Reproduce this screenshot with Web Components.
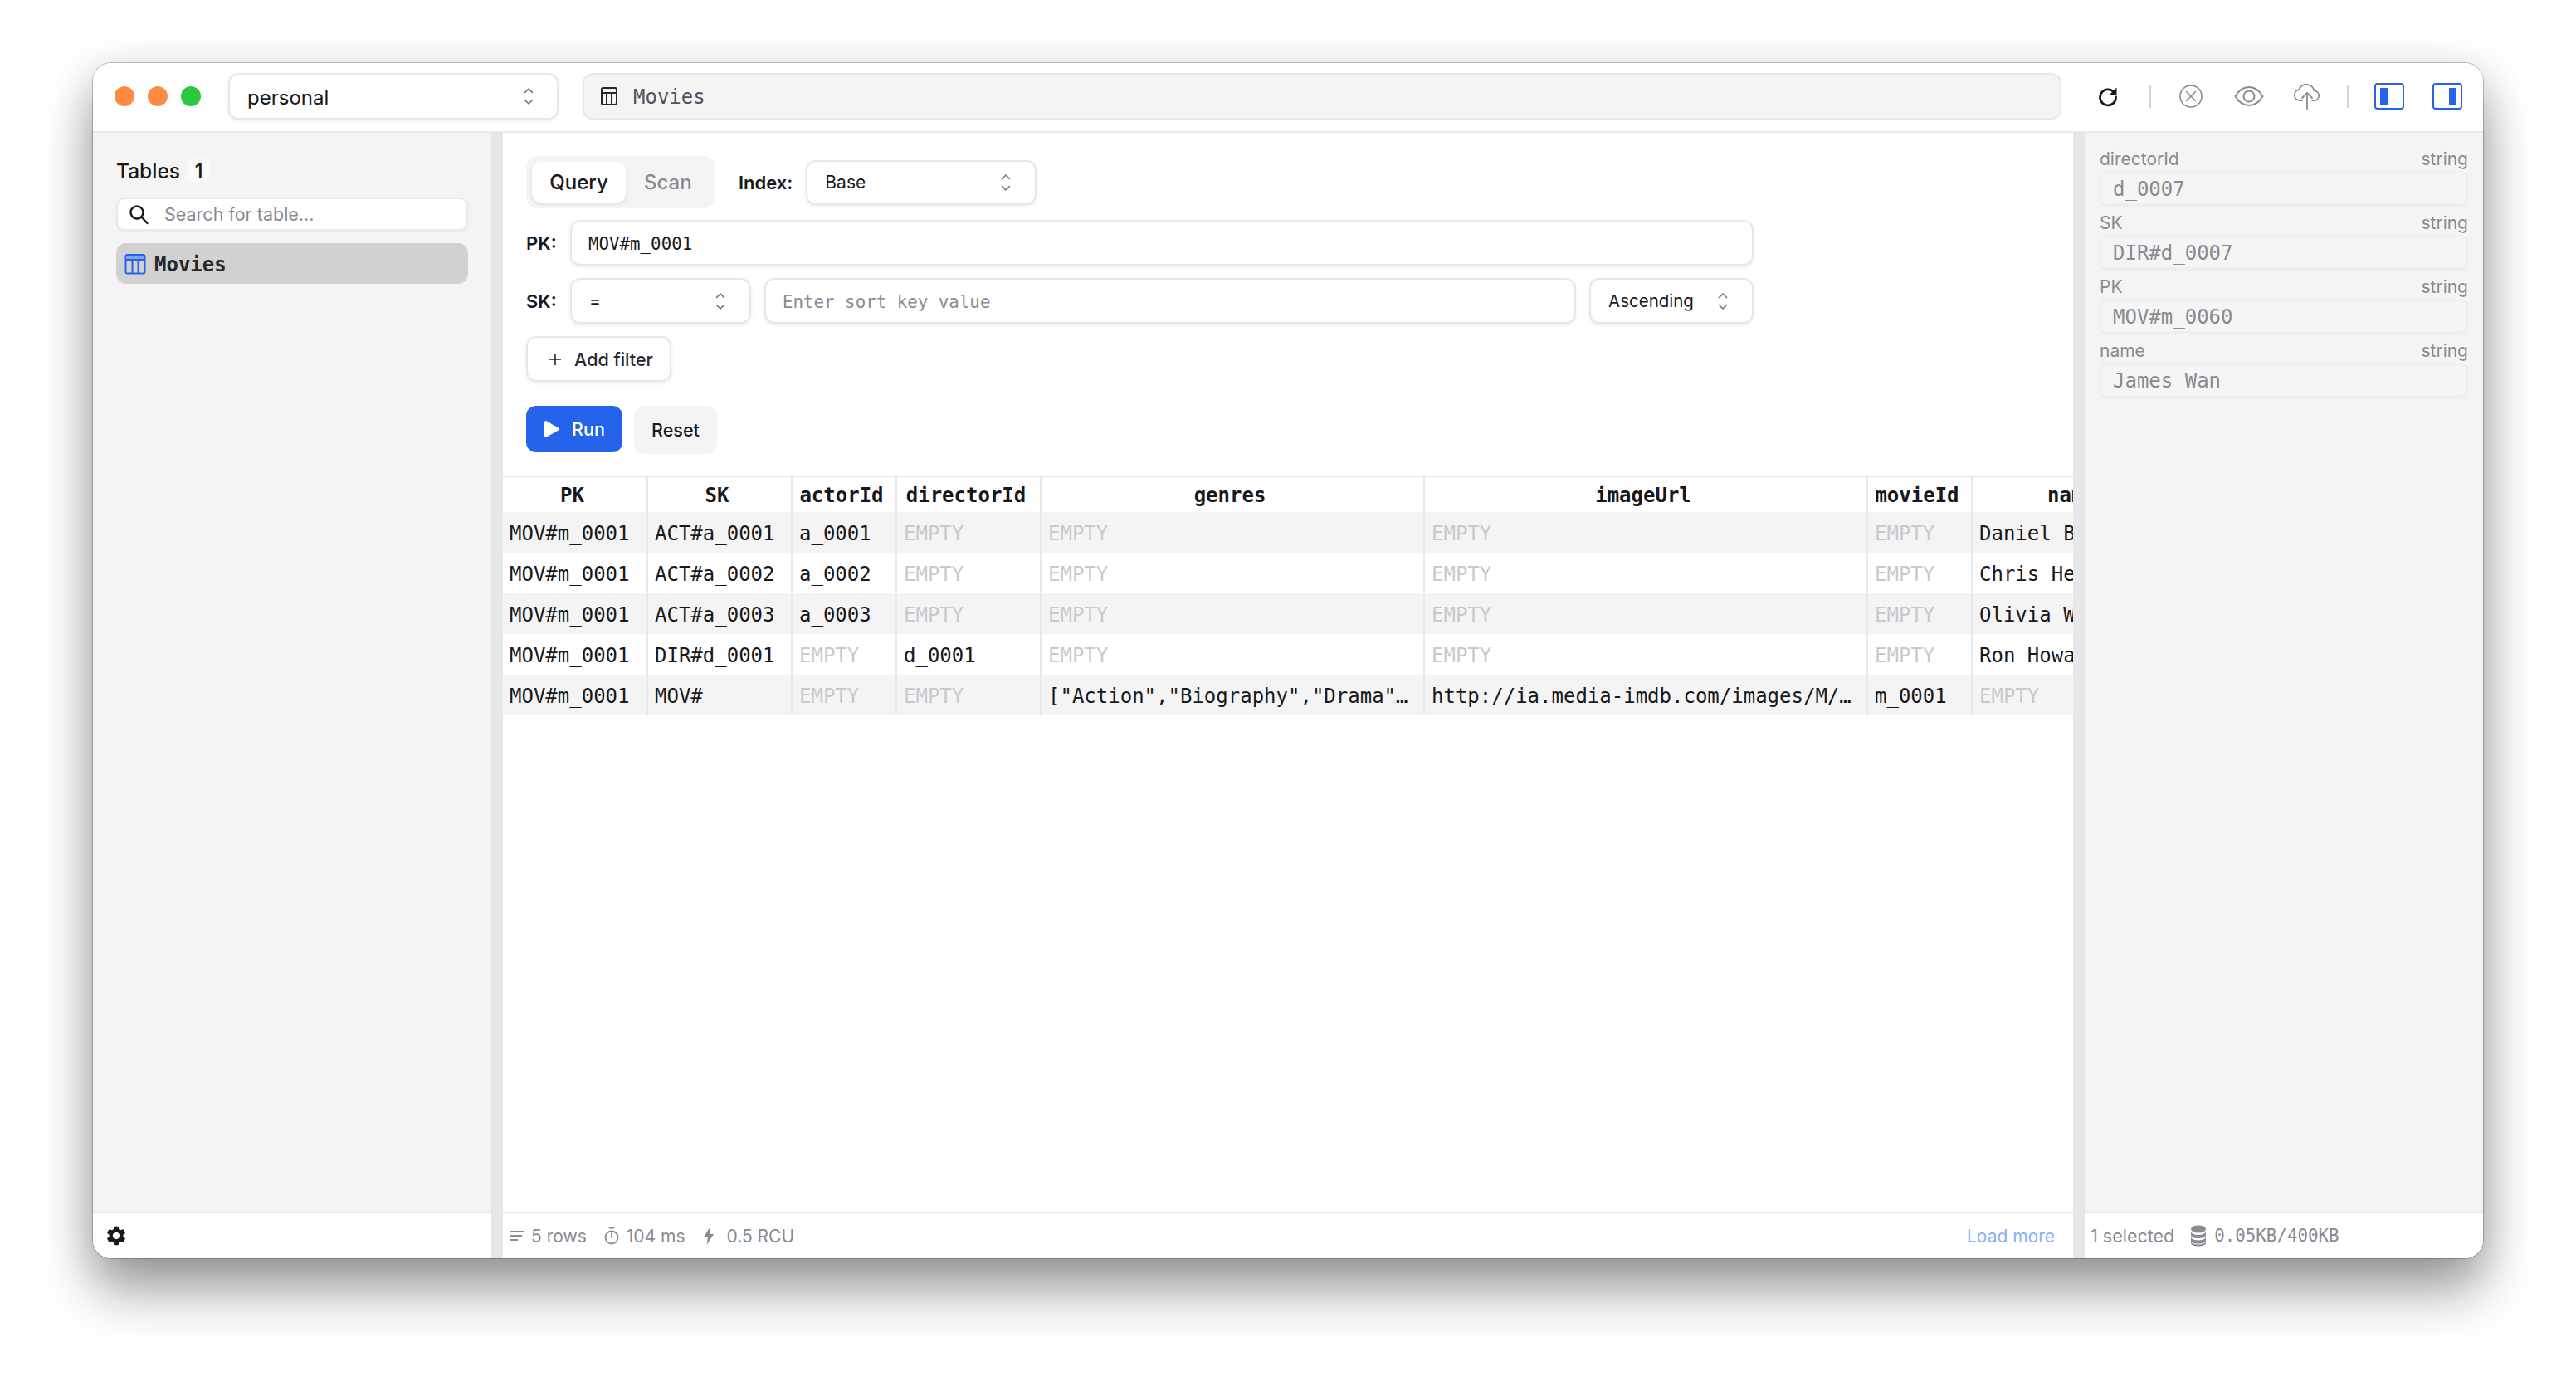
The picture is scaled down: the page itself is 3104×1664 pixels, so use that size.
<!DOCTYPE html>
<html lang="en"><head><meta charset="utf-8"><title>Movies</title>
<style>
html,body{margin:0;background:#fff}
body{padding:76px 112px 0;height:1664px;box-sizing:border-box;overflow:hidden;font-family:Inter,"Liberation Sans",sans-serif;color:#18181b}
</style></head><body>
<app-window>
  <title-bar slot="top"></title-bar>
  <side-bar slot="left"></side-bar>
  <main-pane slot="main"></main-pane>
  <detail-panel slot="right"></detail-panel>
</app-window>
<script>
const MONO='"DejaVu Sans Mono","Liberation Mono",monospace';
const I={
 chev:'<svg width="14" height="24" viewBox="0 0 14 24" fill="none" stroke="#71717a" stroke-width="1.6" stroke-linecap="round" stroke-linejoin="round"><path d="M2.5 7.5 7 3l4.5 4.5M2.5 16.5 7 21l4.5-4.5"/></svg>',
 tableDark:'<svg width="22" height="24" viewBox="0 0 22 24" fill="none" stroke="#27272a" stroke-width="2"><rect x="2" y="2" width="18" height="20" rx="2"/><path d="M2 8h18M8 8v14M14 8v14"/></svg>',
 tableBlue:'<svg width="26" height="26" viewBox="0 0 26 26" fill="none" stroke="#2563eb" stroke-width="2"><rect x="1.5" y="2" width="23" height="22.500" rx="2"/><path d="M1.500 8h23" stroke-width="2"/><path d="M2 5h22" stroke="#7da4f5" stroke-width="4"/><path d="M9.500 8v16M16.500 8v16"/></svg>',
 search:'<svg width="26" height="26" viewBox="0 0 26 26" fill="none" stroke="#18181b" stroke-width="2.400" stroke-linecap="round"><circle cx="11" cy="11" r="7.500"/><path d="m16.500 16.500 7 7.500"/></svg>',
 refresh:'<svg width="26" height="26" viewBox="0 0 26 26" fill="none"><path d="M20.500 8.500A9.500 9.500 0 1 0 22.500 14" stroke="#18181b" stroke-width="2.800" stroke-linecap="round"/><path d="M23.500 2.500v9h-9z" fill="#18181b"/></svg>',
 xcircle:'<svg width="30" height="30" viewBox="0 0 30 30" fill="none" stroke="#8a8a90" stroke-width="1.600" stroke-linecap="round"><circle cx="15" cy="15" r="13"/><path d="m9.500 9.500 11 11M20.500 9.500l-11 11"/></svg>',
 eye:'<svg width="36" height="26" viewBox="0 0 36 26" fill="none" stroke="#8a8a90" stroke-width="2"><path d="M1.500 13C6 5.500 11.500 2 18 2s12 3.500 16.500 11C30 20.500 24.500 24 18 24S6 20.500 1.500 13z"/><circle cx="18" cy="13" r="6.500"/></svg>',
 cloud:'<svg width="34" height="32" viewBox="0 0 34 32" fill="none" stroke="#8a8a90" stroke-width="1.800" stroke-linecap="round" stroke-linejoin="round"><path d="M11 21H8a6.500 6.500 0 0 1-.8-12.900A9.500 9.500 0 0 1 25.500 9.500 5.800 5.800 0 0 1 26.500 21H23"/><path d="M17 31V12M11 18l6-6 6 6"/></svg>',
 panelL:'<svg width="36" height="32" viewBox="0 0 36 32"><rect x="1" y="1" width="34" height="30" rx="3" fill="none" stroke="#2563eb" stroke-width="2"/><rect x="7" y="6" width="9" height="20" fill="#2563eb"/></svg>',
 panelR:'<svg width="36" height="32" viewBox="0 0 36 32"><rect x="1" y="1" width="34" height="30" rx="3" fill="none" stroke="#2563eb" stroke-width="2"/><rect x="20" y="6" width="9" height="20" fill="#2563eb"/></svg>',
 plus:'<svg width="14" height="14" viewBox="0 0 14 14" stroke="#27272a" stroke-width="1.600"><path d="M7 0v14M0 7h14"/></svg>',
 play:'<svg width="20" height="22" viewBox="0 0 20 22"><path d="M1 2.500v17a1.500 1.500 0 0 0 2.300 1.200l15-8.500a1.400 1.400 0 0 0 0-2.400L3.300 1.300A1.500 1.500 0 0 0 1 2.500z" fill="#fff"/></svg>',
 gear:'<svg width="28" height="28" viewBox="0 0 24 24"><path fill="#18181b" d="M19.140 12.940c.04-.3.06-.61.06-.94 0-.32-.02-.64-.07-.94l2.030-1.580c.18-.14.23-.41.12-.61l-1.920-3.320c-.12-.22-.37-.29-.59-.22l-2.390.96c-.5-.38-1.030-.7-1.620-.94l-.36-2.540c-.04-.24-.24-.41-.48-.41h-3.840c-.24 0-.43.17-.47.41l-.36 2.540c-.59.24-1.130.57-1.620.94l-2.390-.96c-.22-.08-.47 0-.59.22L2.740 8.870c-.12.21-.08.47.12.61l2.030 1.580c-.05.3-.09.63-.09.94s.02.64.07.94l-2.030 1.580c-.18.14-.23.41-.12.61l1.920 3.320c.12.22.37.29.59.22l2.390-.96c.5.38 1.030.7 1.620.94l.36 2.540c.05.24.24.41.48.41h3.840c.24 0 .44-.17.47-.41l.36-2.540c.59-.24 1.130-.56 1.620-.94l2.390.96c.22.08.47 0 .59-.22l1.920-3.320c.12-.22.07-.47-.12-.61l-2.010-1.580zM12 15.600c-1.980 0-3.600-1.620-3.600-3.600s1.620-3.600 3.600-3.600 3.600 1.620 3.600 3.600-1.620 3.600-3.600 3.600z"/></svg>',
 lines:'<svg width="18" height="14" viewBox="0 0 18 14" stroke="#8a8a90" stroke-width="1.800"><path d="M1 2h16M1 7h14M1 12h9"/></svg>',
 clock:'<svg width="18" height="22" viewBox="0 0 18 22" fill="none" stroke="#8a8a90" stroke-width="1.800" stroke-linecap="round"><circle cx="9" cy="13" r="7.500"/><path d="M6.500 1.500h5M9 8v5"/></svg>',
 bolt:'<svg width="14" height="22" viewBox="0 0 14 22"><path d="M9 0 1 12.500h5L4.500 22 13 9H8z" fill="#8a8a90"/></svg>',
 db:'<svg width="20" height="26" viewBox="0 0 20 26" fill="#8a8a90"><ellipse cx="10" cy="5" rx="9" ry="4.500"/><path d="M1 8.500c1.500 2.500 5 3.500 9 3.500s7.500-1 9-3.500V12c0 2.500-4 4-9 4s-9-1.500-9-4zM1 15c1.500 2.500 5 3.500 9 3.500s7.500-1 9-3.500v3.500c0 2.500-4 4-9 4s-9-1.500-9-4zM1 20.500c1.500 2 5 3 9 3s7.500-1 9-3V22c0 2-4 3.500-9 3.500S1 24 1 22z"/></svg>'
};
function def(name,css,html){
  customElements.define(name,class extends HTMLElement{
    constructor(){super();this.attachShadow({mode:'open'});}
    connectedCallback(){
      if(this.shadowRoot.firstChild)return;
      this.shadowRoot.innerHTML='<style>'+css+'</style>'+(typeof html==='function'?html(this):html);
    }
  });
}
def('app-window',`
:host{display:flex;flex-direction:column;width:2880px;height:1440px;background:#fff;border-radius:22px;overflow:hidden;position:relative;
 box-shadow:0 0 0 1px rgba(0,0,0,.22),0 40px 64px rgba(0,0,0,.36),0 8px 50px rgba(0,0,0,.14)}
.row{display:flex;flex:1;min-height:0}
::slotted([slot=left]),::slotted([slot=right]){width:480px;flex:none}
::slotted([slot=main]){flex:1;min-width:0}
.bar{width:14px;background:#e5e7eb;flex:none}
`,`<slot name="top"></slot><div class="row"><slot name="left"></slot><div class="bar"></div><slot name="main"></slot><div class="bar"></div><slot name="right"></slot></div>`);

def('traffic-lights',`:host{display:flex;gap:16px;width:163px;padding-left:26px;box-sizing:border-box;flex:none}
i{width:24px;height:24px;border-radius:50%;background:#fd8c43;display:block}i:last-child{background:#2bc840}`,`<i></i><i></i><i></i>`);

def('select-box',`
:host{display:flex;align-items:center;justify-content:space-between;box-sizing:border-box;height:var(--h,54px);padding:0 var(--pr,28px) 0 21px;background:#fff;border:2px solid #e5e7eb;border-radius:12px;box-shadow:0 2px 4px rgba(0,0,0,.07);font-size:var(--fs,21px);flex:none}
span{padding-top:var(--tp,0)}
`,`<span><slot></slot></span>${I.chev}`);

def('icon-btn',`:host{display:flex;align-items:center;justify-content:center;width:70px;height:36px;flex:none}`,`<slot></slot>`);

def('title-bar',`
:host{display:flex;align-items:center;height:84px;box-sizing:border-box;border-bottom:2px solid #e5e7eb;background:#fff;padding-bottom:2px;flex:none}
select-box{width:398px;--h:56px;--fs:24px;--pr:27px;--tp:2px;margin-right:29px}
.path{display:flex;align-items:center;gap:18px;width:1782px;height:56px;box-sizing:border-box;flex:none;padding-left:19px;background:#f4f4f5;border:2px solid #e5e7eb;border-radius:12px;font:24px ${MONO};color:#52525b}
.path span{padding-top:2px}
.tools{display:flex;align-items:center;margin-left:6px}
.sep{width:2px;height:28px;background:#d4d4d8;flex:none}
svg{display:block}
`,`<traffic-lights></traffic-lights><select-box>personal</select-box>
<div class="path">${I.tableDark}<span>Movies</span></div>
<div class="tools"><icon-btn style="width:100px">${I.refresh}</icon-btn><div class="sep"></div><icon-btn style="width:96px">${I.xcircle}</icon-btn><icon-btn style="width:44px">${I.eye}</icon-btn><icon-btn style="width:96px">${I.cloud}</icon-btn><div class="sep"></div><icon-btn style="width:98px">${I.panelL}</icon-btn><icon-btn style="width:42px">${I.panelR}</icon-btn></div>`);

def('status-bar',`
:host{display:flex;align-items:center;height:56px;box-sizing:border-box;border-top:2px solid #e5e7eb;background:#fff;flex:none;font-size:21px;color:#8a8a90;padding:0 var(--px,8px)}
`,`<slot></slot>`);

def('side-bar',`
:host{display:flex;flex-direction:column;background:#f4f4f5}
.c{flex:1;padding:32px 28px 0 28px}
.h{display:flex;align-items:center;height:28px;font-size:24.500px;font-weight:500}
.h b{font-weight:500;background:#fafafa;border-radius:5px;margin-left:10px;width:25px;height:28px;display:flex;align-items:center;justify-content:center}
.s{display:flex;align-items:center;gap:18px;height:40px;box-sizing:border-box;margin-top:18px;background:#fff;border:2px solid #e8e9ec;border-radius:10px;padding-left:12px;font-size:21.500px;color:#8a8a90;box-shadow:0 1px 3px rgba(0,0,0,.06)}
.it{display:flex;align-items:center;gap:10px;height:49px;margin-top:15px;background:#d1d1d1;border-radius:12px;padding-left:10px;font:bold 24px ${MONO};color:#27272a}
.it span{padding-top:2px}
svg{display:block}
status-bar{--px:14px}
`,`<div class="c"><div class="h">Tables<b>1</b></div><div class="s">${I.search}<span>Search for table...</span></div><div class="it">${I.tableBlue}<span>Movies</span></div></div><status-bar>${I.gear}</status-bar>`);

def('tab-switch',`
:host{display:flex;align-items:center;height:63px;width:228px;box-sizing:border-box;padding-left:7px;background:#f4f4f5;border-radius:14px;font-size:24px;font-weight:500;flex:none}
.on{display:flex;align-items:center;justify-content:center;width:113px;height:49px;background:#fff;border-radius:10px;box-shadow:0 2px 4px rgba(0,0,0,.1)}
.off{color:#8a8a90;margin-left:22px}
`,`<span class="on">Query</span><span class="off">Scan</span>`);

def('text-field',`
:host{display:flex;align-items:center;height:55px;box-sizing:border-box;padding:2px 0 0 20px;background:#fff;border:2px solid #e5e7eb;border-radius:12px;box-shadow:0 2px 4px rgba(0,0,0,.07);font:20.800px ${MONO};min-width:0}
`,`<slot></slot>`);

def('query-form',`
:host{display:flex;flex-direction:column;padding:28px 0 0 28px;width:1479px;font-size:21.500px;flex:none}
.r{display:flex;align-items:center}
.l{font-weight:600;font-size:22px;width:53px;flex:none}
.ix{font-weight:600;margin:0 16px 0 28px;font-size:22px}
.r+.r{margin-top:15px}
.r.first{margin-bottom:-1px}
text-field.g{color:#8a8a90}
.b{display:flex;align-items:center;justify-content:center;box-sizing:border-box;font-weight:500;font-size:21.500px;border-radius:12px}
.add{width:175px;height:55px;gap:16px;padding-left:6px;background:#fff;border:2px solid #e5e7eb;box-shadow:0 2px 4px rgba(0,0,0,.07);color:#27272a}
.run{width:116px;height:56px;gap:14px;background:#2563eb;color:#fff}
.rs{width:100px;height:58px;background:#f4f4f5;margin-left:14px}
.r.rr{margin-top:29px;align-items:flex-start}
svg{display:block}
`,`<div class="r first"><tab-switch></tab-switch><span class="ix">Index:</span><select-box style="width:278px">Base</select-box></div>
<div class="r"><span class="l">PK:</span><text-field style="width:1426px">MOV#m_0001</text-field></div>
<div class="r"><span class="l">SK:</span><select-box style="width:218px;--h:55px;font-family:${MONO};--fs:20.800px">=</select-box><text-field class="g" style="width:978px;margin-left:16px">Enter sort key value</text-field><select-box style="width:198px;--h:55px;margin-left:16px;--fs:20.500px">Ascending</select-box></div>
<div class="r"><div class="b add">${I.plus}<span>Add filter</span></div></div>
<div class="r rr"><div class="b run">${I.play}<span>Run</span></div><div class="b rs">Reset</div></div>`);

const cols=['PK','SK','actorId','directorId','genres','imageUrl','movieId','name'];
const widths=[175,174,126,174,462,534,126,246];
const rows=[
 ['MOV#m_0001','ACT#a_0001','a_0001',0,0,0,0,'Daniel Bruhl'],
 ['MOV#m_0001','ACT#a_0002','a_0002',0,0,0,0,'Chris Hemsworth'],
 ['MOV#m_0001','ACT#a_0003','a_0003',0,0,0,0,'Olivia Wilde'],
 ['MOV#m_0001','DIR#d_0001',0,'d_0001',0,0,0,'Ron Howard'],
 ['MOV#m_0001','MOV#',0,0,'["Action","Biography","Drama"…','http://ia.media-imdb.com/images/M/…','m_0001',0]
];
def('data-table',`
:host{display:block;flex:1;min-height:0;overflow:hidden;border-top:2px solid #e5e7eb;font:24px ${MONO};color:#18181b}
.g{display:grid;grid-template-columns:${widths.map(w=>w+'px').join(' ')};grid-auto-rows:49px;width:max-content}
.g>div{display:flex;align-items:center;padding:2px 4px 0 8px;border-right:2px solid #e8e9ec;white-space:nowrap;overflow:hidden;box-sizing:border-box}
.g>.h{height:42px;justify-content:center;font-weight:bold;padding:2px 6px 0 0}
.g>.o{background:#f4f4f5}
.e{color:#c9c9cc}
`,()=>{
 let s='<div class="g" style="grid-template-rows:42px">';
 cols.forEach(c=>s+=`<div class="h">${c}</div>`);
 rows.forEach((r,i)=>r.forEach(v=>{s+=`<div class="${i%2==0?'o':''}">${v?`<span>${v}</span>`:'<span class="e">EMPTY</span>'}</div>`}));
 return s+'</div>';
});

def('main-pane',`
:host{display:flex;flex-direction:column;background:#fff;min-width:0}
.sp{height:26px;flex:none}
.lm{margin-left:auto;color:#8ab0f8;margin-right:14px}
svg{display:block}
status-bar{gap:8px}
`,`<query-form></query-form><div class="sp"></div><data-table></data-table>
<status-bar>${I.lines}<span>5 rows</span><span style="margin-left:13px;display:flex">${I.clock}</span><span style="margin-left:1px">104 ms</span><span style="display:flex;margin-left:14px">${I.bolt}</span><span style="margin-left:6px">0.5 RCU</span><span class="lm">Load more</span></status-bar>`);

def('attr-field',`
:host{display:block;height:77px;color:#8a8a90;font-size:21px}
.t{display:flex;justify-content:space-between;align-items:center;height:31px}
.v{display:flex;align-items:center;height:42px;box-sizing:border-box;padding:2px 0 0 14px;background:#f5f5f6;border:2px solid #eeeef0;border-bottom-width:4px;border-radius:8px;font:24px ${MONO};white-space:pre}
`,h=>`<div class="t"><span>${h.getAttribute('name')}</span><span>string</span></div><div class="v">${h.getAttribute('value')}</div>`);

def('detail-panel',`
:host{display:flex;flex-direction:column;background:#f4f4f5}
.c{flex:1;padding:16px 18px 0 18px}
.mono{font:20.800px ${MONO}}
svg{display:block}
status-bar{--px:7px;gap:9px;color:#8a8a90}
`,`<div class="c"><attr-field name="directorId" value="d_0007"></attr-field><attr-field name="SK" value="DIR#d_0007"></attr-field><attr-field name="PK" value="MOV#m_0060"></attr-field><attr-field name="name" value="James Wan"></attr-field></div>
<status-bar><span style="font-size:21.500px">1 selected</span><span style="margin-left:10px">${I.db}</span><span class="mono">0.05KB/400KB</span></status-bar>`);
</script>
</body></html>
